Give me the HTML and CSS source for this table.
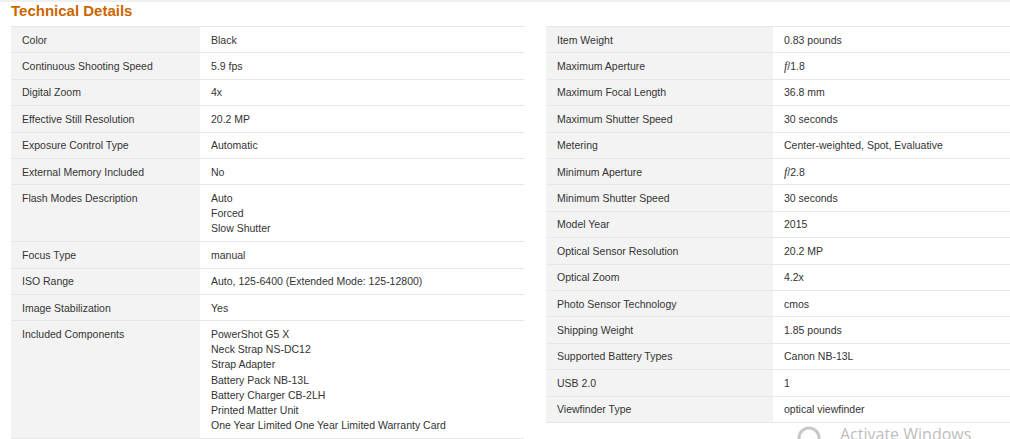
FILE: index.html
```html
<!DOCTYPE html>
<html>
<head>
<meta charset="utf-8">
<link rel="stylesheet" href="styles.css">
</head>
<body>
<div class="page">
  <h2 class="title">Technical Details</h2>
  <div class="tables">
    <table class="spec spec-left">
      <tr><th>Color</th><td>Black</td></tr>
      <tr><th>Continuous Shooting Speed</th><td>5.9 fps</td></tr>
      <tr><th>Digital Zoom</th><td>4x</td></tr>
      <tr><th>Effective Still Resolution</th><td>20.2 MP</td></tr>
      <tr><th>Exposure Control Type</th><td>Automatic</td></tr>
      <tr><th>External Memory Included</th><td>No</td></tr>
      <tr><th>Flash Modes Description</th><td>Auto<br>Forced<br>Slow Shutter</td></tr>
      <tr><th>Focus Type</th><td>manual</td></tr>
      <tr><th>ISO Range</th><td>Auto, 125-6400 (Extended Mode: 125-12800)</td></tr>
      <tr><th>Image Stabilization</th><td>Yes</td></tr>
      <tr><th>Included Components</th><td>PowerShot G5 X<br>Neck Strap NS-DC12<br>Strap Adapter<br>Battery Pack NB-13L<br>Battery Charger CB-2LH<br>Printed Matter Unit<br>One Year Limited One Year Limited Warranty Card</td></tr>
    </table>
    <table class="spec spec-right">
      <tr><th>Item Weight</th><td>0.83 pounds</td></tr>
      <tr><th>Maximum Aperture</th><td><i class="f">f</i>/1.8</td></tr>
      <tr><th>Maximum Focal Length</th><td>36.8 mm</td></tr>
      <tr><th>Maximum Shutter Speed</th><td>30 seconds</td></tr>
      <tr><th>Metering</th><td>Center-weighted, Spot, Evaluative</td></tr>
      <tr><th>Minimum Aperture</th><td><i class="f">f</i>/2.8</td></tr>
      <tr><th>Minimum Shutter Speed</th><td>30 seconds</td></tr>
      <tr><th>Model Year</th><td>2015</td></tr>
      <tr><th>Optical Sensor Resolution</th><td>20.2 MP</td></tr>
      <tr><th>Optical Zoom</th><td>4.2x</td></tr>
      <tr><th>Photo Sensor Technology</th><td>cmos</td></tr>
      <tr><th>Shipping Weight</th><td>1.85 pounds</td></tr>
      <tr><th>Supported Battery Types</th><td>Canon NB-13L</td></tr>
      <tr><th>USB 2.0</th><td>1</td></tr>
      <tr><th>Viewfinder Type</th><td>optical viewfinder</td></tr>
    </table>
  </div>
</div>
<div class="watermark">
  <svg class="wm-icon" width="26" height="20" viewBox="0 0 26 20"><circle cx="13" cy="13" r="10" fill="none" stroke="#c8c8c8" stroke-width="3"/></svg>
  <span>Activate Windows</span>
</div>
</body>
</html>
```
FILE: styles.css
```css
html, body {
  margin: 0;
  padding: 0;
  background: #fff;
  overflow: hidden;
}
body {
  width: 1010px;
  height: 439px;
  position: relative;
  font-family: "Liberation Sans", Arial, sans-serif;
  color: #333;
  border-top: 2px solid #f0f0f0;
  box-sizing: border-box;
}
.page {
  padding-left: 11px;
}
.title {
  margin: 0;
  padding-top: 0;
  height: 24px;
  font-size: 15px;
  line-height: 18px;
  font-weight: bold;
  color: #cc6600;
}
.tables {
  display: flex;
  gap: 22px;
  align-items: flex-start;
}
.spec {
  border-collapse: collapse;
  flex: none;
  width: 513px;
  font-size: 10.5px;
  line-height: 15.2px;
  border-top: 1px solid #e7e7e7;
}
.spec th, .spec td {
  text-align: left;
  vertical-align: top;
  font-weight: normal;
  padding: 5.6px 11px 4.62px 11px;
  border-bottom: 1px solid #e7e7e7;
  white-space: nowrap;
}
.spec th {
  background: #f3f3f3;
}
.spec-left th { width: 167px; }
.spec-right th { width: 205px; }
.f {
  font-family: "Liberation Serif", "Times New Roman", serif;
  font-size: 12px;
}
.watermark {
  position: absolute;
  left: 796px;
  top: 420px;
  display: flex;
  align-items: flex-start;
  gap: 18px;
  color: #bdbdbd;
  font-family: "Open Sans", "Liberation Sans", sans-serif;
  font-size: 16px;
  line-height: 24px;
}
.wm-icon {
  margin-top: 3px;
}
```
